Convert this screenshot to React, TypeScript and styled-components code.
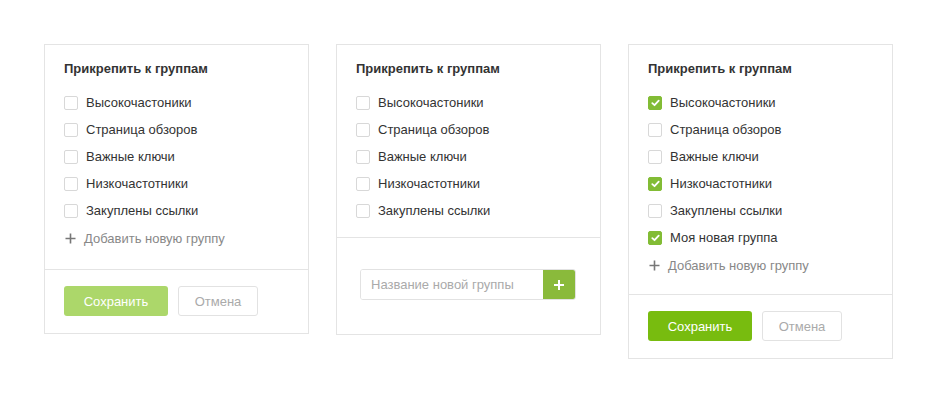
import React from "react";
import styled, { createGlobalStyle } from "styled-components";

const Global = createGlobalStyle`
  html, body { margin: 0; padding: 0; background: #ffffff; }
  body { font-family: "Liberation Sans", Arial, sans-serif; color: #333; }
  * { box-sizing: border-box; }
`;

const Page = styled.div`
  display: flex;
  align-items: flex-start;
  gap: 27px;
  padding: 44px 0 0 44px;
`;

const Card = styled.div`
  width: 265px;
  border: 1px solid #e4e4e4;
  background: #fff;
`;

const Body = styled.div<{ $bottom: number }>`
  padding: 15px 19px ${(p) => p.$bottom}px 19px;
`;

const Title = styled.div`
  font-size: 13px;
  font-weight: bold;
  line-height: 18px;
  color: #333;
  margin-bottom: 11px;
`;

const List = styled.div`
  display: flex;
  flex-direction: column;
`;

const Row = styled.label`
  display: flex;
  align-items: center;
  gap: 8px;
  height: 27px;
  font-size: 13px;
  color: #333;
`;

const Box = styled.span<{ $checked?: boolean }>`
  width: 14px;
  height: 14px;
  border-radius: 2px;
  border: 1px solid ${(p) => (p.$checked ? "#82bc35" : "#d8d8d8")};
  background: ${(p) => (p.$checked ? "#82bc35" : "#fff")};
  display: flex;
  align-items: center;
  justify-content: center;
  flex-shrink: 0;
`;

const AddRow = styled.div`
  display: flex;
  align-items: center;
  gap: 8px;
  height: 27px;
  margin-top: 1px;
  padding-left: 1px;
  font-size: 13px;
  color: #888;
`;

const Footer = styled.div`
  border-top: 1px solid #e4e4e4;
  padding: 16px 19px 17px 19px;
  display: flex;
  gap: 10px;
`;

const SaveButton = styled.button<{ $disabled?: boolean }>`
  width: 104px;
  height: 30px;
  border: none;
  border-radius: 3px;
  background: ${(p) => (p.$disabled ? "#acd76a" : "#78bc0f")};
  color: #fff;
  font-family: "Liberation Sans", Arial, sans-serif;
  font-size: 13px;
  padding: 0;
`;

const CancelButton = styled.button`
  width: 80px;
  height: 30px;
  border: 1px solid #e2e2e2;
  border-radius: 3px;
  background: #fff;
  color: #aaa;
  font-family: "Liberation Sans", Arial, sans-serif;
  font-size: 13px;
  padding: 0;
`;

const InputSection = styled.div`
  border-top: 1px solid #e4e4e4;
  padding: 31px 24px 34px 23px;
`;

const InputGroup = styled.div`
  display: flex;
  height: 31px;
  border: 1px solid #e2e2e2;
  border-radius: 3px;
  overflow: hidden;
`;

const Input = styled.input`
  flex: 1;
  min-width: 0;
  border: none;
  outline: none;
  padding: 0 10px;
  font-family: "Liberation Sans", Arial, sans-serif;
  font-size: 13px;
  color: #333;
  &::placeholder { color: #aaa; }
`;

const PlusButton = styled.button`
  width: 32px;
  border: none;
  background: #8aba3b;
  display: flex;
  align-items: center;
  justify-content: center;
  padding: 0;
`;

const Check = () => (
  <svg width="9" height="8" viewBox="0 0 9 8">
    <path d="M1.3 4.2 L3.5 6.2 L7.7 1.6" stroke="#fff" strokeWidth="1.8" fill="none" strokeLinecap="round" strokeLinejoin="round" />
  </svg>
);

const ThinPlus = () => (
  <svg width="11" height="11" viewBox="0 0 11 11">
    <path d="M5.5 0.5 V10.5 M0.5 5.5 H10.5" stroke="#777" strokeWidth="1.6" />
  </svg>
);

const WhitePlus = () => (
  <svg width="10" height="10" viewBox="0 0 10 10">
    <path d="M5 0 V10 M0 5 H10" stroke="#fff" strokeWidth="2" />
  </svg>
);

const baseGroups = [
  "Высокочастоники",
  "Страница обзоров",
  "Важные ключи",
  "Низкочастотники",
  "Закуплены ссылки",
];

type Item = { label: string; checked?: boolean };

const Items = ({ items }: { items: Item[] }) => (
  <List>
    {items.map((it) => (
      <Row key={it.label}>
        <Box $checked={it.checked}>{it.checked && <Check />}</Box>
        {it.label}
      </Row>
    ))}
  </List>
);

const Add = () => (
  <AddRow>
    <ThinPlus />
    Добавить новую группу
  </AddRow>
);

export default function App() {
  const plain: Item[] = baseGroups.map((l) => ({ label: l }));
  const checked: Item[] = [
    { label: "Высокочастоники", checked: true },
    { label: "Страница обзоров" },
    { label: "Важные ключи" },
    { label: "Низкочастотники", checked: true },
    { label: "Закуплены ссылки" },
    { label: "Моя новая группа", checked: true },
  ];
  return (
    <>
      <Global />
      <Page>
        <Card>
          <Body $bottom={17}>
            <Title>Прикрепить к группам</Title>
            <Items items={plain} />
            <Add />
          </Body>
          <Footer>
            <SaveButton $disabled>Сохранить</SaveButton>
            <CancelButton>Отмена</CancelButton>
          </Footer>
        </Card>
        <Card>
          <Body $bottom={13}>
            <Title>Прикрепить к группам</Title>
            <Items items={plain} />
          </Body>
          <InputSection>
            <InputGroup>
              <Input placeholder="Название новой группы" />
              <PlusButton>
                <WhitePlus />
              </PlusButton>
            </InputGroup>
          </InputSection>
        </Card>
        <Card>
          <Body $bottom={15}>
            <Title>Прикрепить к группам</Title>
            <Items items={checked} />
            <Add />
          </Body>
          <Footer>
            <SaveButton>Сохранить</SaveButton>
            <CancelButton>Отмена</CancelButton>
          </Footer>
        </Card>
      </Page>
    </>
  );
}
